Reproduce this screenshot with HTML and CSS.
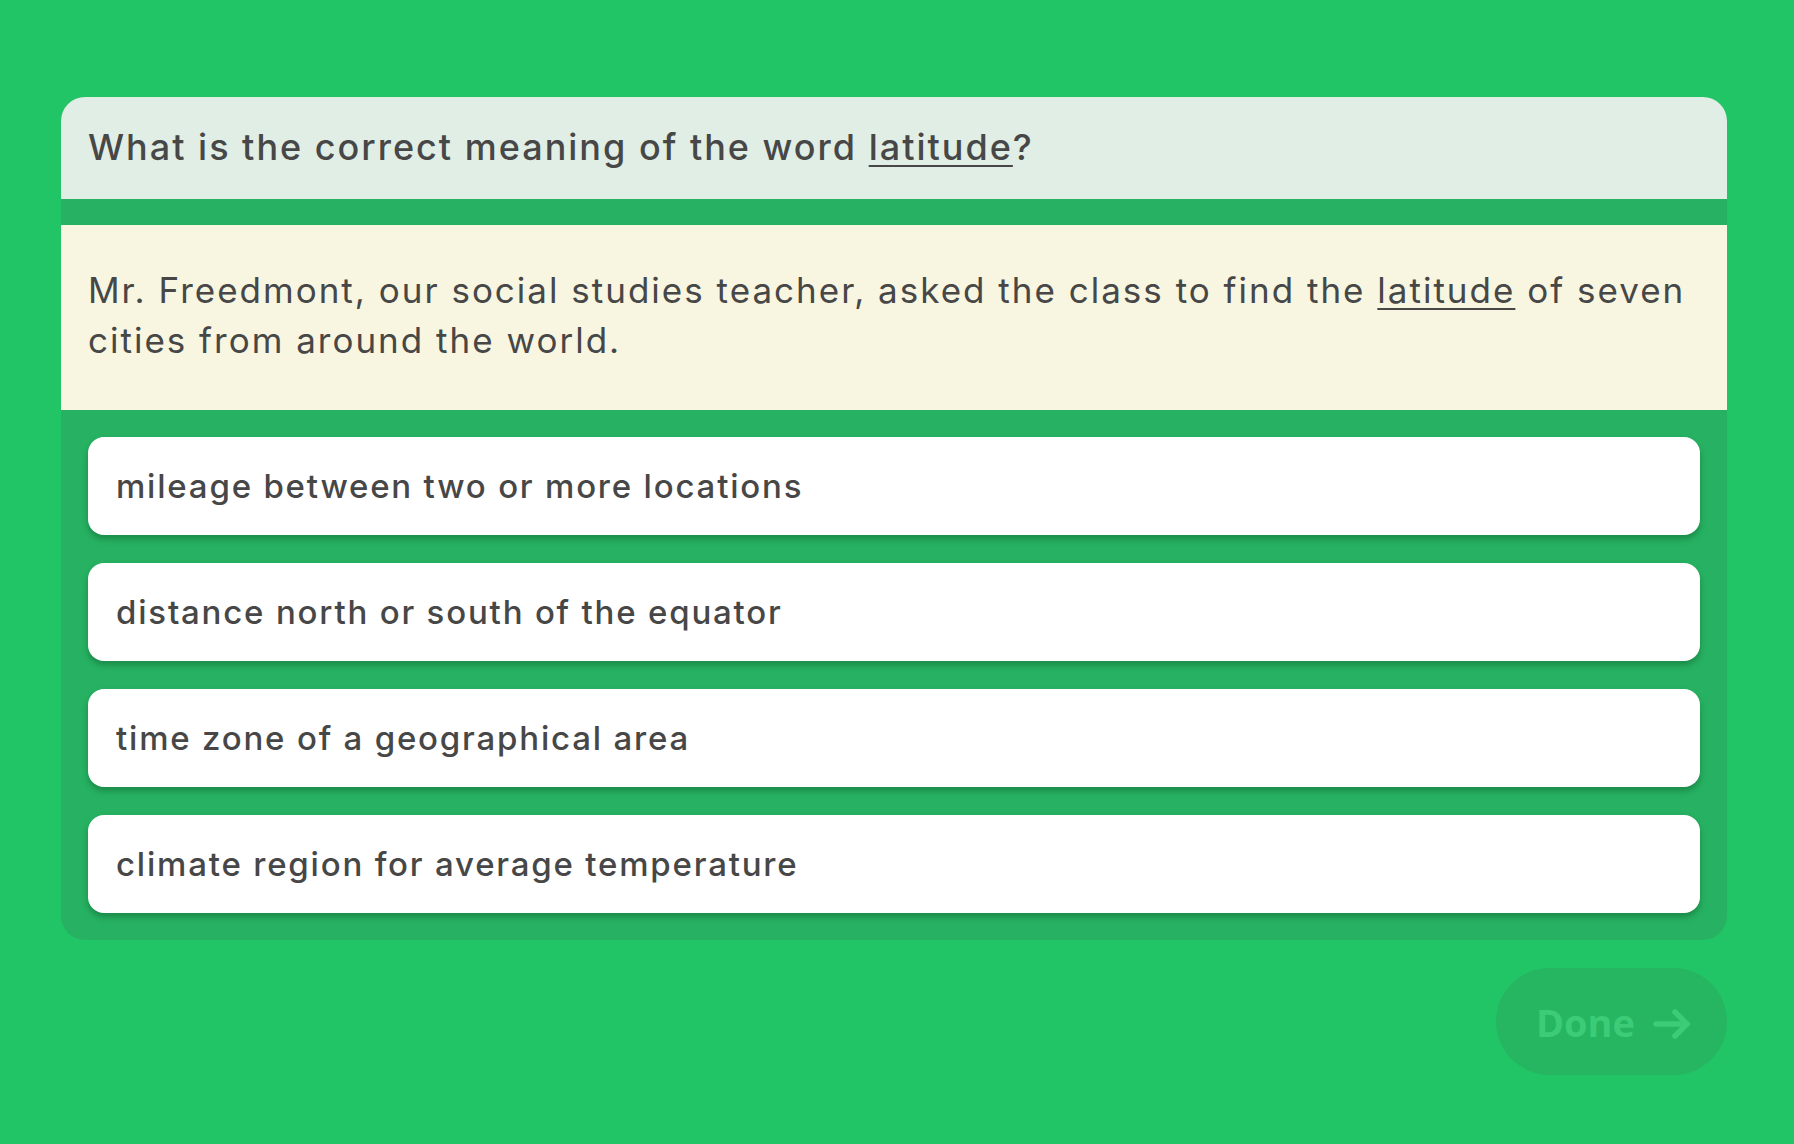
FILE: index.html
```html
<!DOCTYPE html>
<html lang="en">

<head>
  <meta charset="UTF-8">
  <title>Vocabulary Question</title>
  <link rel="stylesheet" href="styles.css">
</head>

<body>

  <main class="quiz">
    <section class="quiz-card">
      <header class="question">
        What is the correct meaning of the word <u>latitude</u>?
      </header>

      <div class="passage">
        Mr. Freedmont, our social studies teacher, asked the class to find the <u>latitude</u> of seven cities from around the world.
      </div>

      <div class="choices">
        <button class="choice">mileage between two or more locations</button>
        <button class="choice">distance north or south of the equator</button>
        <button class="choice">time zone of a geographical area</button>
        <button class="choice">climate region for average temperature</button>
      </div>
    </section>

    <div class="actions">
      <button class="done-btn" disabled>
        Done
        <svg class="arrow" width="38" height="32" viewBox="0 0 38 32" fill="none" stroke="currentColor" stroke-width="5.5" stroke-linecap="round" stroke-linejoin="round">
          <path d="M3 16h31"/>
          <path d="M22 4l12 12-12 12"/>
        </svg>
      </button>
    </div>
  </main>

</body>

</html>
```

FILE: styles.css
```css
body {
  margin: 0;
  padding: 0;
  background: #22c566;
  font-family: 'Inter', 'Noto Sans', sans-serif;
  color: #474747;
}

.quiz {
  padding: 97px 67px 0 61px;
}

.quiz-card {
  background: #27b263; /* darker green behind the choices */
  border-radius: 24px;
  overflow: hidden;
  padding-bottom: 27px;
}

.question {
  background: #e0eee5;
  height: 102px;
  line-height: 100px;
  padding: 0 27px;
  font-size: 36px;
  font-weight: 500;
  letter-spacing: 2px;
}

.question u,
.passage u {
  text-decoration-thickness: 2px;
  text-underline-offset: 5px;
}

.passage {
  margin-top: 26px;
  background: #f8f6e1;
  padding: 40px 27px 45px;
  font-size: 35px;
  line-height: 50px;
  font-weight: 400;
  letter-spacing: 2px;
}

.choices {
  display: flex;
  flex-direction: column;
  gap: 28px;
  padding: 27px 27px 0;
}

.choice {
  height: 98px;
  padding: 0 28px;
  border: none;
  border-radius: 16px;
  background: #fff;
  box-shadow: 0 4px 6px rgba(0, 60, 20, 0.35);
  font-family: inherit;
  font-size: 33px;
  font-weight: 500;
  letter-spacing: 1.8px;
  color: #474747;
  text-align: left;
  cursor: pointer;
}

.actions {
  display: flex;
  justify-content: flex-end;
  margin-top: 28px;
}

.done-btn {
  width: 231px;
  height: 107px;
  padding: 0 0 0 4px;
  border: none;
  border-radius: 54px;
  background: #26b561;
  color: #3ccb76;
  font-family: 'Open Sans', sans-serif;
  font-size: 38px;
  font-weight: 700;
  display: flex;
  align-items: center;
  justify-content: center;
  gap: 18px;
}

.arrow {
  display: block;
  margin-top: 4px;
}
```
